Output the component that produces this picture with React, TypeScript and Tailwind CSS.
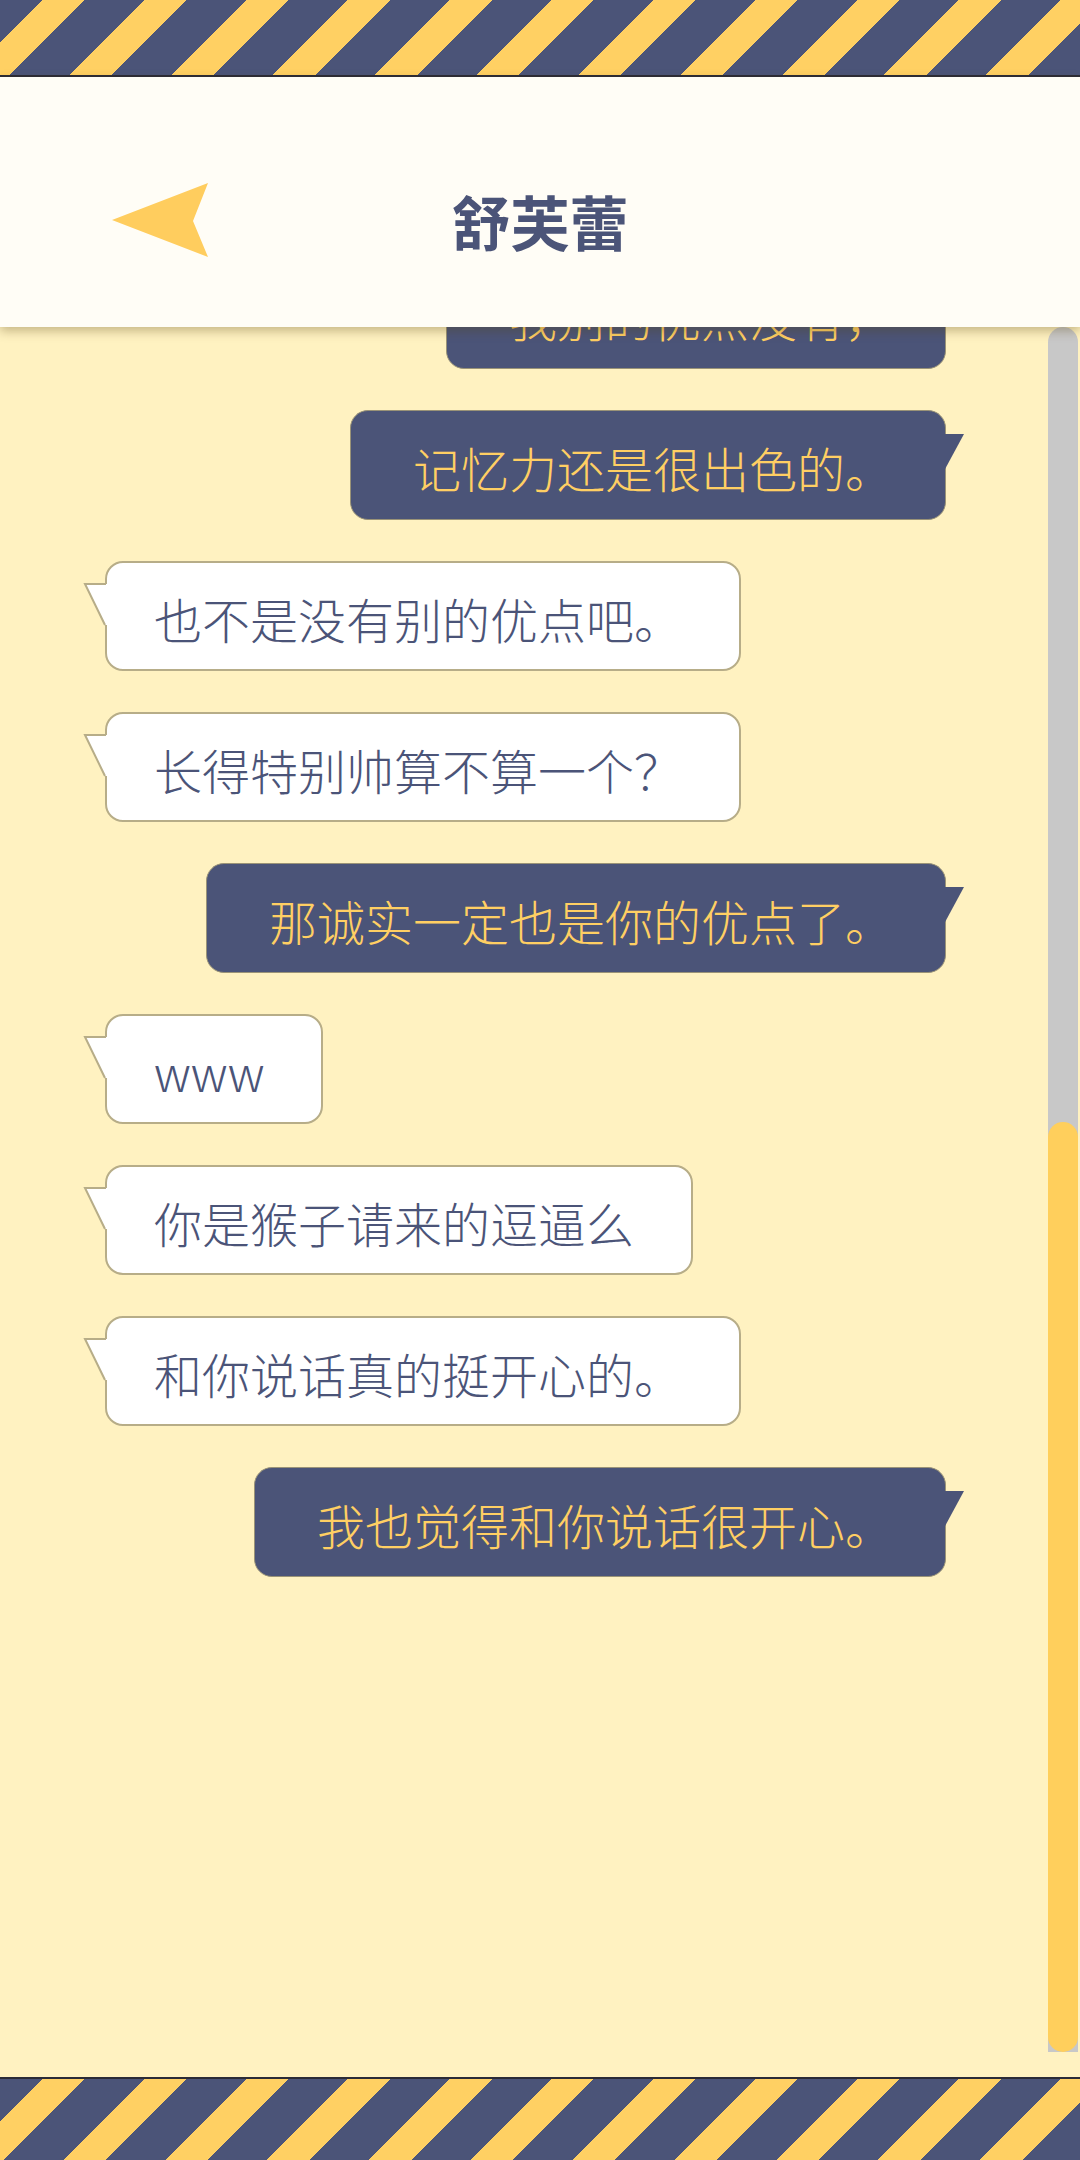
type Msg = { text: string; mine: boolean };

const messages: Msg[] = [
  { text: "我别的优点没有，", mine: true },
  { text: "记忆力还是很出色的。", mine: true },
  { text: "也不是没有别的优点吧。", mine: false },
  { text: "长得特别帅算不算一个？", mine: false },
  { text: "那诚实一定也是你的优点了。", mine: true },
  { text: "www", mine: false },
  { text: "你是猴子请来的逗逼么", mine: false },
  { text: "和你说话真的挺开心的。", mine: false },
  { text: "我也觉得和你说话很开心。", mine: true },
];

function Stripes({ h }: { h: string }) {
  return (
    <div
      className={`${h} w-full bg-[repeating-linear-gradient(135deg,#4b5478_0_30px,#ffd063_30px_60px,#4b5478_60px_72px)]`}
    />
  );
}

function Bubble({ msg, first }: { msg: Msg; first?: boolean }) {
  if (msg.mine) {
    return (
      <div
        className={`relative self-end mr-[102px] h-[110px] shrink-0 flex items-center pl-[62px] pr-[52px] rounded-[18px] bg-[#4b5478] border border-[#9a9377] text-[#ffcf63] ${first ? "-mt-[68px]" : ""}`}
      >
        <span className="whitespace-nowrap pt-[4px]">{msg.text}</span>
        <svg className="absolute right-[-21px] top-[22px]" width="22" height="40" viewBox="0 0 22 40">
          <polygon points="0,1 20,1 0,38" fill="#4b5478" />
        </svg>
      </div>
    );
  }
  return (
    <div className="relative self-start ml-[105px] h-[110px] shrink-0 flex items-center pl-[47px] pr-[57px] rounded-[18px] bg-white border-2 border-[#b7ad88] text-[#4b5478]">
      <span className="whitespace-nowrap pt-[4px]">{msg.text}</span>
      <svg className="absolute left-[-24px] top-[20px]" width="26" height="44" viewBox="0 0 26 44">
        <polygon points="26,1 2,1 22,42 26,42" fill="#ffffff" />
        <polyline points="23,1 2,1 22,42" fill="none" stroke="#b7ad88" strokeWidth="2" />
      </svg>
    </div>
  );
}

export default function App() {
  return (
    <div className="w-[1080px] h-[2160px] flex flex-col overflow-hidden bg-[#fff2c1] font-['Noto_Sans_CJK_SC','Noto_Sans',sans-serif]">
      <Stripes h="h-[75px]" />
      <div className="h-[2px] bg-[#2b2b36]" />

      <header className="relative z-10 h-[250px] shrink-0 bg-[#fffdf6] shadow-[0_4px_10px_rgba(90,70,20,0.35)] grid grid-cols-[1fr_auto_1fr] items-center pt-[36px]">
        <div className="pl-[112px]">
          <svg width="96" height="75" viewBox="0 0 96 75">
            <polygon points="0,37 96,0 81,38 96,74" fill="#ffcd5e" />
          </svg>
        </div>
        <h1 className="text-[59px] leading-none font-bold text-[#4b5478]">舒芙蕾</h1>
        <div />
      </header>

      <div className="h-[1750px] shrink-0 flex overflow-hidden">
        <div className="flex-1 flex flex-col gap-[41px] text-[48px] leading-none font-light">
          {messages.map((m, i) => (
            <Bubble key={i} msg={m} first={i === 0} />
          ))}
        </div>
        <div className="w-[30px] mr-[2px] mb-[25px] flex flex-col bg-[#c8c8c8] rounded-t-full">
          <div className="flex-1" />
          <div className="h-[930px] bg-[#ffcf5c] rounded-full" />
        </div>
      </div>

      <div className="h-[2px] bg-[#2b2b36]" />
      <Stripes h="h-[81px]" />
    </div>
  );
}
